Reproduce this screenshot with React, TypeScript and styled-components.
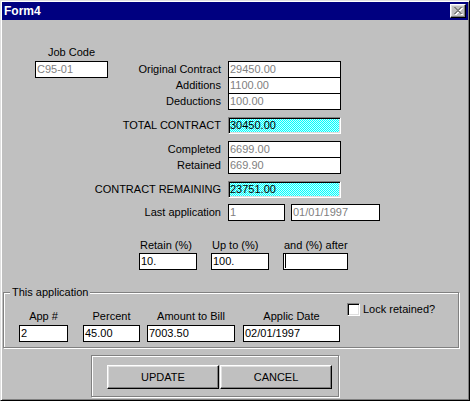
import React from "react";
import styled, { createGlobalStyle } from "styled-components";

const Global = createGlobalStyle`
  html, body { margin: 0; padding: 0; background: #c0c0c0; }
  body { font-family: "Liberation Sans", Arial, sans-serif; font-size: 11px; }
  *, *::before, *::after { box-sizing: border-box; }
`;

const Window = styled.div`
  width: 470px;
  height: 401px;
  background: #c0c0c0;
  border: 1px solid;
  border-color: #dfdfdf #000 #000 #dfdfdf;
  box-shadow: inset 1px 1px #fff, inset -1px -1px #808080;
  padding: 1px;
  display: flex;
  flex-direction: column;
  color: #000;
  font-family: "Liberation Sans", Arial, sans-serif;
  font-size: 11px;
`;

const TitleBar = styled.div`
  flex: none;
  height: 18px;
  background: #000080;
  color: #fff;
  display: flex;
  align-items: center;
  justify-content: space-between;
  padding: 0 2px 0 2px;
`;

const Title = styled.span`
  font-weight: bold;
  font-size: 12px;
  line-height: 14px;
`;

const CloseButton = styled.div`
  width: 16px;
  height: 14px;
  background: #c0c0c0;
  border: 1px solid;
  border-color: #fff #000 #000 #fff;
  box-shadow: inset -1px -1px #808080, inset 1px 1px #dfdfdf;
  display: flex;
  align-items: center;
  justify-content: center;
  padding: 0 0 0 1px;
`;

const Body = styled.div`
  flex: 1;
  display: flex;
  flex-direction: column;
  align-items: flex-start;
`;

const Caption = styled.span<{ $align?: "left" | "center" | "right" }>`
  display: block;
  line-height: 13px;
  white-space: nowrap;
  text-align: ${(p) => p.$align ?? "left"};
`;

const JobCaption = styled(Caption)`
  margin: 26px 0 0 33px;
  width: 73px;
`;

const FieldRow = styled.div<{ $mt: number }>`
  display: flex;
  align-items: center;
  height: 17px;
  margin-top: ${(p) => p.$mt}px;
`;

const LabelCell = styled.div`
  width: 226px;
  padding-right: 7px;
  display: flex;
  align-items: center;
  justify-content: flex-end;
`;

const Field = styled.div<{ $w: number; $disabled?: boolean; $ml?: number }>`
  flex: none;
  width: ${(p) => p.$w}px;
  height: 17px;
  margin-left: ${(p) => p.$ml ?? 0}px;
  background: #fff;
  border: 1px solid #000;
  padding: 0 1px;
  line-height: 15px;
  color: ${(p) => (p.$disabled ? "#808080" : "#000")};
  white-space: nowrap;
  overflow: hidden;
`;

const JobField = styled(Field)`
  margin-left: 33px;
  margin-right: auto;
`;

const HighlightField = styled.div<{ $w: number }>`
  flex: none;
  width: ${(p) => p.$w}px;
  height: 17px;
  border: 1px solid;
  border-color: #808080 #fff #fff #808080;
  box-shadow: inset 1px 1px #000, inset -1px -1px #dfdfdf;
  background: repeating-conic-gradient(#00ffff 0deg 90deg, #c8ffff 90deg 180deg) 0 0 / 2px 2px;
  padding: 0 1px;
  line-height: 15px;
  white-space: nowrap;
`;

const Caret = styled.span`
  display: block;
  width: 1px;
  height: 14px;
  background: #000;
`;

const RetainGroup = styled.div`
  display: flex;
  gap: 14px;
  margin: 18px 0 0 137px;
`;

const StackCol = styled.div<{ $w: number; $ml?: number; $mt?: number }>`
  display: flex;
  flex-direction: column;
  width: ${(p) => p.$w}px;
  margin-left: ${(p) => p.$ml ?? 0}px;
  margin-top: ${(p) => p.$mt ?? 0}px;
`;

const ColCaption = styled(Caption)<{ $gap: number; $pad?: number }>`
  margin-bottom: ${(p) => p.$gap}px;
  padding-left: ${(p) => p.$pad ?? 0}px;
`;

const GroupBox = styled.fieldset`
  margin: 16px 0 0 1px;
  padding: 0;
  min-width: 0;
  width: 456px;
  border: 1px solid #808080;
  box-shadow: inset 1px 1px #fff, 1px 1px #fff;
`;

const GroupLegend = styled.legend`
  margin-left: 6px;
  padding: 0 2px;
  line-height: 13px;
  background: #c0c0c0;
`;

const GroupContent = styled.div`
  display: flex;
  align-items: flex-start;
  padding: 0 0 5px 15px;
`;

const CheckRow = styled.div`
  display: flex;
  align-items: center;
  margin: 4px 0 0 7px;
`;

const CheckBox = styled.span`
  display: block;
  width: 13px;
  height: 13px;
  background: #fff;
  border: 1px solid;
  border-color: #808080 #fff #fff #808080;
  box-shadow: inset 1px 1px #000, inset -1px -1px #dfdfdf;
`;

const CheckLabel = styled(Caption)`
  margin-left: 3px;
`;

const ButtonPanel = styled.div`
  margin: 7px 0 0 89px;
  width: 248px;
  height: 42px;
  border: 1px solid #808080;
  box-shadow: inset 1px 1px #fff, 1px 1px #fff;
  padding: 9px 0 0 15px;
  display: flex;
  gap: 1px;
`;

const PushButton = styled.button`
  width: 112px;
  height: 24px;
  padding: 0;
  margin: 0;
  background: #c0c0c0;
  border: 1px solid;
  border-color: #fff #000 #000 #fff;
  box-shadow: inset -1px -1px #808080, inset 1px 1px #dfdfdf;
  font: inherit;
  line-height: 13px;
  color: #000;
`;

const X_ROWS = ["11000011", "01100110", "00111100", "00011000", "00111100", "01100110", "11000011"];
const X_PIXELS: { x: number; y: number }[] = X_ROWS.reduce<{ x: number; y: number }[]>((acc, row, y) => {
  row.split("").forEach((c, x) => {
    if (c === "1") acc.push({ x, y });
  });
  return acc;
}, []);

const CloseGlyph = () => (
  <svg width="9" height="8" viewBox="0 0 9 8" shapeRendering="crispEdges">
    {X_PIXELS.map((p, i) => (
      <rect key={"w" + i} x={p.x + 1} y={p.y + 1} width="1" height="1" fill="#fff" />
    ))}
    {X_PIXELS.map((p, i) => (
      <rect key={"g" + i} x={p.x} y={p.y} width="1" height="1" fill="#808080" />
    ))}
  </svg>
);

type RowDef = { label: string; value: string; mt: number; highlight?: boolean };

const ROWS: RowDef[] = [
  { label: "Additions", value: "1100.00", mt: -1 },
  { label: "Deductions", value: "100.00", mt: -1 },
  { label: "TOTAL CONTRACT", value: "30450.00", mt: 7, highlight: true },
  { label: "Completed", value: "6699.00", mt: 7 },
  { label: "Retained", value: "669.90", mt: -1 },
  { label: "CONTRACT REMAINING", value: "23751.00", mt: 7, highlight: true },
];

const APP_COLS = [
  { label: "App #", value: "2", w: 49, ml: 0 },
  { label: "Percent", value: "45.00", w: 57, ml: 15 },
  { label: "Amount to Bill", value: "7003.50", w: 88, ml: 7 },
  { label: "Applic Date", value: "02/01/1997", w: 97, ml: 8 },
];

export default function App() {
  return (
    <>
      <Global />
      <Window>
        <TitleBar>
          <Title>Form4</Title>
          <CloseButton>
            <CloseGlyph />
          </CloseButton>
        </TitleBar>
        <Body>
          <JobCaption $align="center">Job Code</JobCaption>
          <FieldRow $mt={2}>
            <LabelCell>
              <JobField $w={73} $disabled>
                C95-01
              </JobField>
              <Caption>Original Contract</Caption>
            </LabelCell>
            <Field $w={113} $disabled>
              29450.00
            </Field>
          </FieldRow>
          {ROWS.map((r) => (
            <FieldRow key={r.label} $mt={r.mt}>
              <LabelCell>
                <Caption>{r.label}</Caption>
              </LabelCell>
              {r.highlight ? (
                <HighlightField $w={113}>{r.value}</HighlightField>
              ) : (
                <Field $w={113} $disabled>
                  {r.value}
                </Field>
              )}
            </FieldRow>
          ))}
          <FieldRow $mt={6}>
            <LabelCell>
              <Caption>Last application</Caption>
            </LabelCell>
            <Field $w={57} $disabled>
              1
            </Field>
            <Field $w={89} $ml={6} $disabled>
              01/01/1997
            </Field>
          </FieldRow>
          <RetainGroup>
            <StackCol $w={58}>
              <ColCaption $gap={1} $pad={1}>Retain (%)</ColCaption>
              <Field $w={58}>10.</Field>
            </StackCol>
            <StackCol $w={58}>
              <ColCaption $gap={1} $pad={1}>Up to (%)</ColCaption>
              <Field $w={58}>100.</Field>
            </StackCol>
            <StackCol $w={65}>
              <ColCaption $gap={1} $pad={1}>and (%) after</ColCaption>
              <Field $w={65}>
                <Caret />
              </Field>
            </StackCol>
          </RetainGroup>
          <GroupBox>
            <GroupLegend>This application</GroupLegend>
            <GroupContent>
              {APP_COLS.map((c) => (
                <StackCol key={c.label} $w={c.w} $ml={c.ml} $mt={11}>
                  <ColCaption $gap={2} $align="center">
                    {c.label}
                  </ColCaption>
                  <Field $w={c.w}>{c.value}</Field>
                </StackCol>
              ))}
              <CheckRow>
                <CheckBox />
                <CheckLabel>Lock retained?</CheckLabel>
              </CheckRow>
            </GroupContent>
          </GroupBox>
          <ButtonPanel>
            <PushButton>UPDATE</PushButton>
            <PushButton>CANCEL</PushButton>
          </ButtonPanel>
        </Body>
      </Window>
    </>
  );
}
